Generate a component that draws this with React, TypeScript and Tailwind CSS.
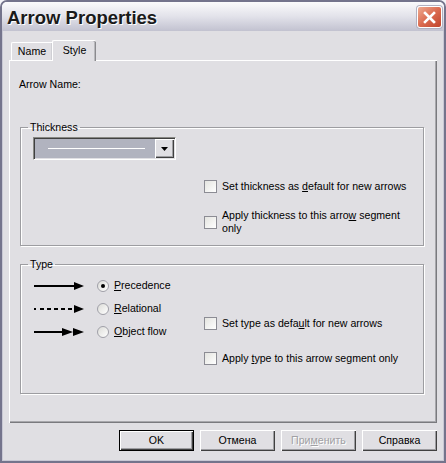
import React from "react";

const font = { fontFamily: '"Liberation Sans", Arial, sans-serif' };

function U({ children }: { children: React.ReactNode }) {
  return <span className="underline underline-offset-[1px]">{children}</span>;
}

function Checkbox() {
  return (
    <div className="w-[13px] h-[13px] shrink-0 border border-[#8c8c94] bg-gradient-to-br from-[#e4e4e0] to-white" />
  );
}

function Radio({ checked }: { checked?: boolean }) {
  return (
    <div className="w-[12px] h-[12px] shrink-0 rounded-full border border-[#a0a0a8] bg-gradient-to-br from-[#dcdcd8] to-white flex items-center justify-center">
      {checked && <div className="w-[4px] h-[4px] rounded-full bg-black" />}
    </div>
  );
}

function Arrow({ kind }: { kind: "solid" | "dashed" | "double" }) {
  return (
    <svg width="51" height="12" viewBox="0 0 51 12" className="shrink-0">
      {kind === "solid" && (
        <>
          <line x1="0" y1="6" x2="41" y2="6" stroke="black" strokeWidth="2" />
          <polygon points="40,2 50,6 40,10" fill="black" />
        </>
      )}
      {kind === "dashed" && (
        <>
          <line x1="0" y1="6" x2="41" y2="6" stroke="black" strokeWidth="2" strokeDasharray="2 4 4 3 4 3 4 3 4 3 4 3" />
          <polygon points="40,2 50,6 40,10" fill="black" />
        </>
      )}
      {kind === "double" && (
        <>
          <line x1="0" y1="6" x2="29" y2="6" stroke="black" strokeWidth="2" />
          <polygon points="28,2 39,6 28,10" fill="black" />
          <polygon points="39,2 50,6 39,10" fill="black" />
        </>
      )}
    </svg>
  );
}

function Button({ children, isDefault, disabled }: { children: React.ReactNode; isDefault?: boolean; disabled?: boolean }) {
  return (
    <div
      className={
        "w-[75px] h-[21px] flex items-center justify-center bg-[#e0dfe3] " +
        (isDefault ? "border border-black " : "") +
        "shadow-[inset_1px_1px_0_#ffffff,inset_-1px_-1px_0_#404040,inset_-2px_-2px_0_#9d9da1]"
      }
    >
      <span className={disabled ? "text-[#a0a0a4] [text-shadow:1px_1px_0_#ffffff]" : "text-black"}>{children}</span>
    </div>
  );
}

export default function App() {
  return (
    <div className="w-[446px] h-[463px] bg-[#f4f4f8] text-[10.6px] leading-[13px] text-black select-none" style={font}>
      <div className="w-full h-full flex flex-col rounded-t-[7px] overflow-hidden border-2 border-[#74748c]">
        {/* title bar */}
        <div className="h-[29px] shrink-0 flex items-center justify-between pl-[5px] pr-[2px] bg-gradient-to-b from-[#fbfbfc] via-[#e2e2ea] to-[#c2c2d0]">
          <span className="font-bold text-[18.5px] leading-[22px] text-[#1a1a1a] [text-shadow:1px_1px_0_#ffffff] mt-[2px]">Arrow Properties</span>
          <div className="w-[25px] h-[22px] rounded-[3px] border border-white bg-gradient-to-br from-[#eeab92] via-[#db6b50] to-[#c0432b] flex items-center justify-center shadow-[0_0_0_1px_#b0b0c0] mt-[1px]">
            <svg width="13" height="13" viewBox="0 0 13 13">
              <path d="M2 2 L11 11 M11 2 L2 11" stroke="white" strokeWidth="2.6" strokeLinecap="square" />
            </svg>
          </div>
        </div>
        {/* client */}
        <div className="flex-1 flex flex-col bg-[#e0dfe3] border-x border-b border-[#c8c8d4] pl-[6px] pr-[5px] pt-[9px]">
          {/* tabs */}
          <div className="flex items-end h-[20px] pl-[2px] relative z-10">
            <div className="w-[41px] h-[18px] flex items-center justify-center border-l border-t border-white rounded-tl-[2px] shadow-[inset_-1px_0_0_#cfcfd4]">
              Name
            </div>
            <div className="w-[44px] h-[21px] -mb-[1px] flex items-start pt-[3px] justify-center bg-[#e0dfe3] border-l border-t border-white rounded-t-[2px] shadow-[inset_-1px_0_0_#8a8a8e,inset_-2px_0_0_#b8b8bc]">
              Style
            </div>
          </div>
          {/* panel */}
          <div className="w-[428px] h-[363px] shrink-0 border-l border-t border-white shadow-[inset_-1px_-1px_0_#7a7a7e,inset_-2px_-2px_0_#a8a8ac] flex flex-col">
            <div className="pl-[9px] pt-[17px]">Arrow Name:</div>

            {/* Thickness */}
            <fieldset className="mt-[30px] ml-[10px] w-[404px] h-[125px] border border-[#9d9da1] shadow-[1px_1px_0_#ffffff,inset_1px_1px_0_#ffffff]">
              <legend className="ml-[7px] px-[2px] leading-[13px]">Thickness</legend>
              <div className="ml-[12px] mt-[3px] w-[143px] h-[23px] flex border-t border-l border-[#888884] border-b border-r border-b-white border-r-white shadow-[inset_1px_1px_0_#404040]">
                <div className="flex-1 flex items-center bg-[#b1b3bf] ml-[1px] mt-[1px] mb-[1px] pl-[13px]">
                  <div className="w-[97px] h-[1px] bg-white" />
                </div>
                <div className="w-[19px] flex items-center justify-center bg-[#e0dfe3] my-[1px] mr-[1px] shadow-[inset_1px_1px_0_#ffffff,inset_-1px_-1px_0_#404040,inset_-2px_-2px_0_#9d9da1]">
                  <svg width="7" height="4" viewBox="0 0 7 4">
                    <polygon points="0,0 7,0 3.5,4" fill="black" />
                  </svg>
                </div>
              </div>
              <div className="ml-[183px] mt-[20px] flex flex-col">
                <div className="flex items-center gap-[5px] h-[13px]">
                  <Checkbox />
                  <span>
                    Set thickness as <U>d</U>efault for new arrows
                  </span>
                </div>
                <div className="flex items-center gap-[5px] mt-[16px]">
                  <Checkbox />
                  <div className="flex flex-col">
                    <span>
                      Apply thickness to this arro<U>w</U> segment
                    </span>
                    <span>only</span>
                  </div>
                </div>
              </div>
            </fieldset>

            {/* Type */}
            <fieldset className="mt-[12px] ml-[10px] w-[404px] h-[136px] border border-[#9d9da1] shadow-[1px_1px_0_#ffffff,inset_1px_1px_0_#ffffff]">
              <legend className="ml-[7px] px-[2px] leading-[13px]">Type</legend>
              <div className="flex">
                <div className="w-[183px] shrink-0 flex flex-col pl-[13px] pt-[3px]">
                  <div className="h-[23px] flex items-center">
                    <Arrow kind="solid" />
                    <div className="ml-[12px]"><Radio checked /></div>
                    <span className="ml-[5px]"><U>P</U>recedence</span>
                  </div>
                  <div className="h-[23px] flex items-center">
                    <Arrow kind="dashed" />
                    <div className="ml-[12px]"><Radio /></div>
                    <span className="ml-[5px]"><U>R</U>elational</span>
                  </div>
                  <div className="h-[23px] flex items-center">
                    <Arrow kind="double" />
                    <div className="ml-[12px]"><Radio /></div>
                    <span className="ml-[5px]"><U>O</U>bject flow</span>
                  </div>
                </div>
                <div className="flex flex-col pt-[46px]">
                  <div className="flex items-center gap-[5px] h-[13px]">
                    <Checkbox />
                    <span>
                      Set type as defa<U>u</U>lt for new arrows
                    </span>
                  </div>
                  <div className="flex items-center gap-[5px] h-[13px] mt-[22px]">
                    <Checkbox />
                    <span>
                      Apply <U>t</U>ype to this arrow segment only
                    </span>
                  </div>
                </div>
              </div>
            </fieldset>
          </div>
          {/* buttons */}
          <div className="flex justify-end gap-[6px] mt-[7px] pr-[1px]">
            <Button isDefault>OK</Button>
            <Button>Отмена</Button>
            <Button disabled>
              При<U>м</U>енить
            </Button>
            <Button>Справка</Button>
          </div>
        </div>
      </div>
    </div>
  );
}
